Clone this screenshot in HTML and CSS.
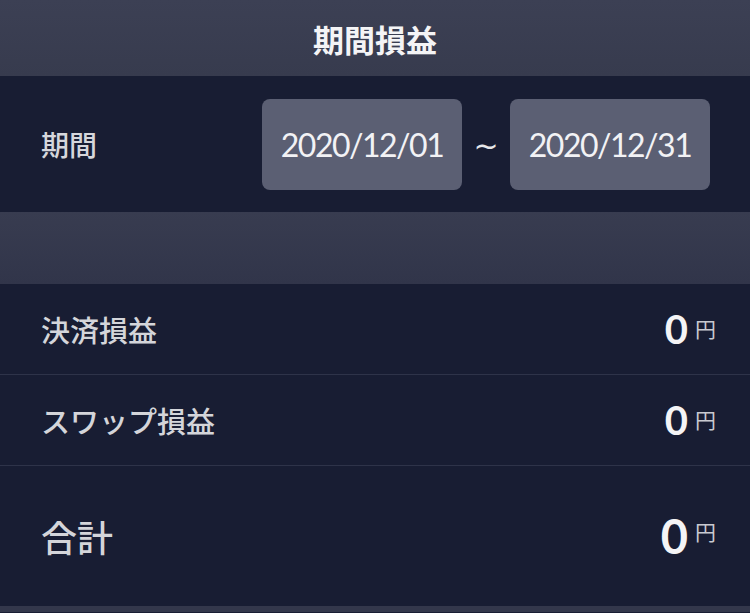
FILE: index.html
```html
<!DOCTYPE html>
<html lang="ja">
<head>
  <meta charset="UTF-8" />
  <meta name="viewport" content="width=device-width, initial-scale=1.0">
  <title>期間損益</title>
  <link rel="stylesheet" href="styles.css">
</head>
<body>
  <div class="header">期間損益</div>

  <div class="period-row">
    <div class="period-label">期間</div>
    <div class="period-dates">
      <div class="date-box">2020/12/01</div>
      <span class="tilde">~</span>
      <div class="date-box">2020/12/31</div>
    </div>
  </div>

  <div class="spacer"></div>

  <ul class="pl-list">
    <li class="pl-row">
      <span class="pl-label">決済損益</span>
      <span class="pl-value">0<span class="yen">円</span></span>
    </li>
    <li class="pl-row">
      <span class="pl-label">スワップ損益</span>
      <span class="pl-value">0<span class="yen">円</span></span>
    </li>
    <li class="pl-row total">
      <span class="pl-label">合計</span>
      <span class="pl-value">0<span class="yen">円</span></span>
    </li>
  </ul>
  <div class="footer-strip"></div>
</body>
</html>
```

FILE: styles.css
```css
body {
  margin: 0;
  background: #181d33;
  color: #fff;
  font-family: 'Noto Sans CJK JP', sans-serif;
  width: 750px;
  height: 613px;
  overflow: hidden;
}
.header {
  height: 76px;
  display: flex;
  align-items: center;
  justify-content: center;
  background: linear-gradient(#3c4054, #373b4e);
  font-size: 31px;
  font-weight: 700;
  color: #f4f4f6;
}
.period-row {
  height: 136px;
  display: flex;
  align-items: center;
  justify-content: space-between;
  padding: 0 40px 0 41px;
  background: #181d33;
}
.period-label {
  font-size: 28px;
  font-weight: 500;
  color: #d6d7dc;
}
.period-dates {
  display: flex;
  align-items: center;
}
.date-box {
  width: 200px;
  height: 91px;
  display: flex;
  align-items: center;
  justify-content: center;
  background: #5b5f73;
  border-radius: 8px;
  font-family: 'Lato', sans-serif;
  font-size: 32px;
  letter-spacing: -1.5px;
  color: #f2f2f5;
}
.tilde {
  width: 48px;
  text-align: center;
  font-family: 'DejaVu Sans', sans-serif;
  font-size: 30px;
  color: #e6e7ea;
  margin-top: 2px;
}
.spacer {
  height: 72px;
  background: linear-gradient(#383c50, #31354a);
}
.pl-list {
  list-style: none;
  margin: 0;
  padding: 0;
}
.pl-row {
  height: 90px;
  display: flex;
  align-items: center;
  justify-content: space-between;
  padding: 0 34px 0 41px;
  border-bottom: 1px solid #2e3349;
}
.pl-row.total {
  height: 140px;
  border-bottom: none;
}
.pl-label {
  font-size: 29px;
  font-weight: 500;
  color: #d4d5da;
}
.total .pl-label {
  font-size: 36px;
}
.pl-value {
  font-family: 'Lato', sans-serif;
  font-size: 40px;
  font-weight: 700;
  color: #f4f4f6;
  display: flex;
  align-items: flex-start;
}
.total .pl-value {
  font-size: 47px;
}
.yen {
  font-family: 'Noto Sans CJK JP', sans-serif;
  font-size: 21px;
  font-weight: 400;
  color: #c8c9d0;
  margin-left: 7px;
  margin-top: 8px;
}
.footer-strip {
  height: 6px;
  background: #33374b;
}
```
